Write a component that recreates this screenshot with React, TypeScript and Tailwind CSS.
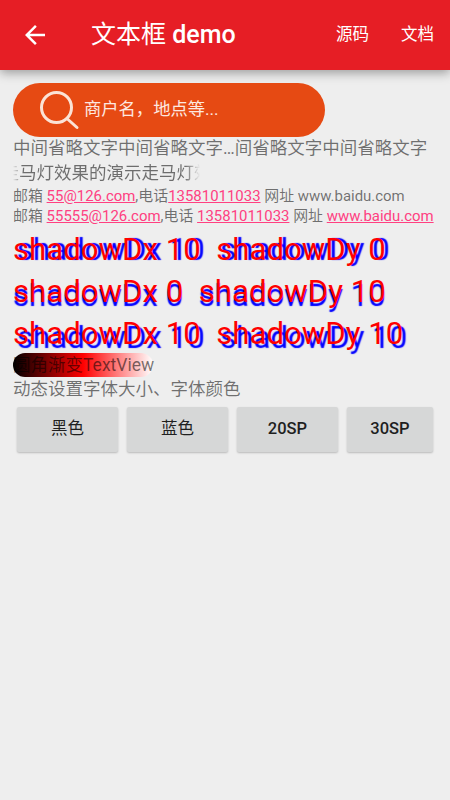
const font = "[font-family:Roboto,'Noto_Sans_CJK_SC',sans-serif]";

const Link = ({ children }: { children: string }) => (
  <span className="text-[#ff4081] underline">{children}</span>
);

const shadowRows = [
  { text: "shadowDx 10\u00a0\u00a0shadowDy 0", cls: "[text-shadow:4px_0_1px_#0000ff]" },
  { text: "shadowDx 0\u00a0\u00a0shadowDy 10", cls: "[text-shadow:0_4px_1px_#0000ff]" },
  { text: "shadowDx 10\u00a0\u00a0shadowDy 10", cls: "[text-shadow:4px_4px_1px_#0000ff]" },
];

const buttons = [
  { label: "黑色", w: "w-[101px]", weight: "font-normal" },
  { label: "蓝色", w: "w-[101px]", weight: "font-normal" },
  { label: "20SP", w: "w-[101px]", weight: "font-medium" },
  { label: "30SP", w: "w-[86px]", weight: "font-medium" },
];

export default function App() {
  return (
    <div className={`${font} w-[450px] h-[800px] bg-[#eeeeee] overflow-hidden`}>
      {/* Toolbar */}
      <div className="h-[70px] bg-[#e61e25] flex items-center shadow-[0_3px_10px_rgba(0,0,0,0.35)] text-white">
        <svg viewBox="0 0 24 24" className="ml-[20px] w-[30px] h-[30px]" fill="currentColor">
          <path d="M20 11H7.83l5.59-5.59L12 4l-8 8 8 8 1.41-1.41L7.83 13H20v-2z" />
        </svg>
        <div className="ml-[41px] text-[25px] flex-1">
          文本框 <span className="font-medium">demo</span>
        </div>
        <div className="text-[16.5px] mr-[32px]">源码</div>
        <div className="text-[16.5px] mr-[16px]">文档</div>
      </div>

      <div className="pl-[13px] pr-[17px] pt-[13px]">
        {/* Search */}
        <div className="w-[312px] h-[54px] rounded-[27px] bg-[#e64a13] flex items-center text-[#fde8e0]">
          <svg viewBox="0 0 40 40" className="ml-[27px] w-[40px] h-[40px]" fill="none" stroke="#fbe3d6" strokeWidth="3" strokeLinecap="round">
            <circle cx="16.5" cy="17.5" r="15" />
            <path d="M27.5 29 L37 37.5" />
          </svg>
          <span className="ml-[4px] text-[17.3px]">商户名，地点等...</span>
        </div>

        <div className="-mt-px h-[25px] leading-[25px] text-[17.5px] text-black/54 whitespace-nowrap">
          中间省略文字中间省略文字…间省略文字中间省略文字
        </div>
        <div className="w-[187px] h-[24px] leading-[24px] text-[17.5px] text-black/54 whitespace-nowrap overflow-hidden [mask-image:linear-gradient(to_right,transparent,black_5%,black_92%,transparent)]">
          <span className="block -ml-[11.5px]">走马灯效果的演示走马灯效果</span>
        </div>

        <div className="mt-[1px] h-[20px] leading-[20px] text-[14.95px] text-black/54 whitespace-nowrap">
          邮箱 <Link>55@126.com</Link>,电话<Link>13581011033</Link> 网址 www.baidu.com
        </div>
        <div className="h-[20px] leading-[20px] text-[14.95px] text-black/54 whitespace-nowrap">
          邮箱 <Link>55555@126.com</Link>,电话 <Link>13581011033</Link> 网址 <Link>www.baidu.com</Link>
        </div>

        {/* Shadow text */}
        <div className="flex flex-col pt-[3px] h-[127px]">
          {shadowRows.map((row) => (
            <div key={row.text} className={`h-[42px] leading-[42px] text-[31.2px] text-[#ff0000] whitespace-nowrap ${row.cls}`}>
              {row.text}
            </div>
          ))}
        </div>

        {/* Gradient */}
        <div className="w-[140px] h-[24px] leading-[24px] rounded-[12px] text-[17.5px] text-black/54 whitespace-nowrap bg-[linear-gradient(to_right,#000000,#ff0000,#ffffff)]">
          圆角渐变TextView
        </div>
        <div className="h-[25px] leading-[25px] text-[17.5px] text-black/54">动态设置字体大小、字体颜色</div>

        {/* Buttons */}
        <div className="mt-[5px] ml-[4px] flex gap-[9px]">
          {buttons.map((b) => (
            <div key={b.label} className={`${b.w} h-[45px] rounded-[2px] bg-[#d6d7d7] shadow-[0_1px_2px_rgba(0,0,0,0.22)] flex items-center justify-center text-[16.5px] text-[#1f1f1f] ${b.weight}`}>
              {b.label}
            </div>
          ))}
        </div>
      </div>
    </div>
  );
}
